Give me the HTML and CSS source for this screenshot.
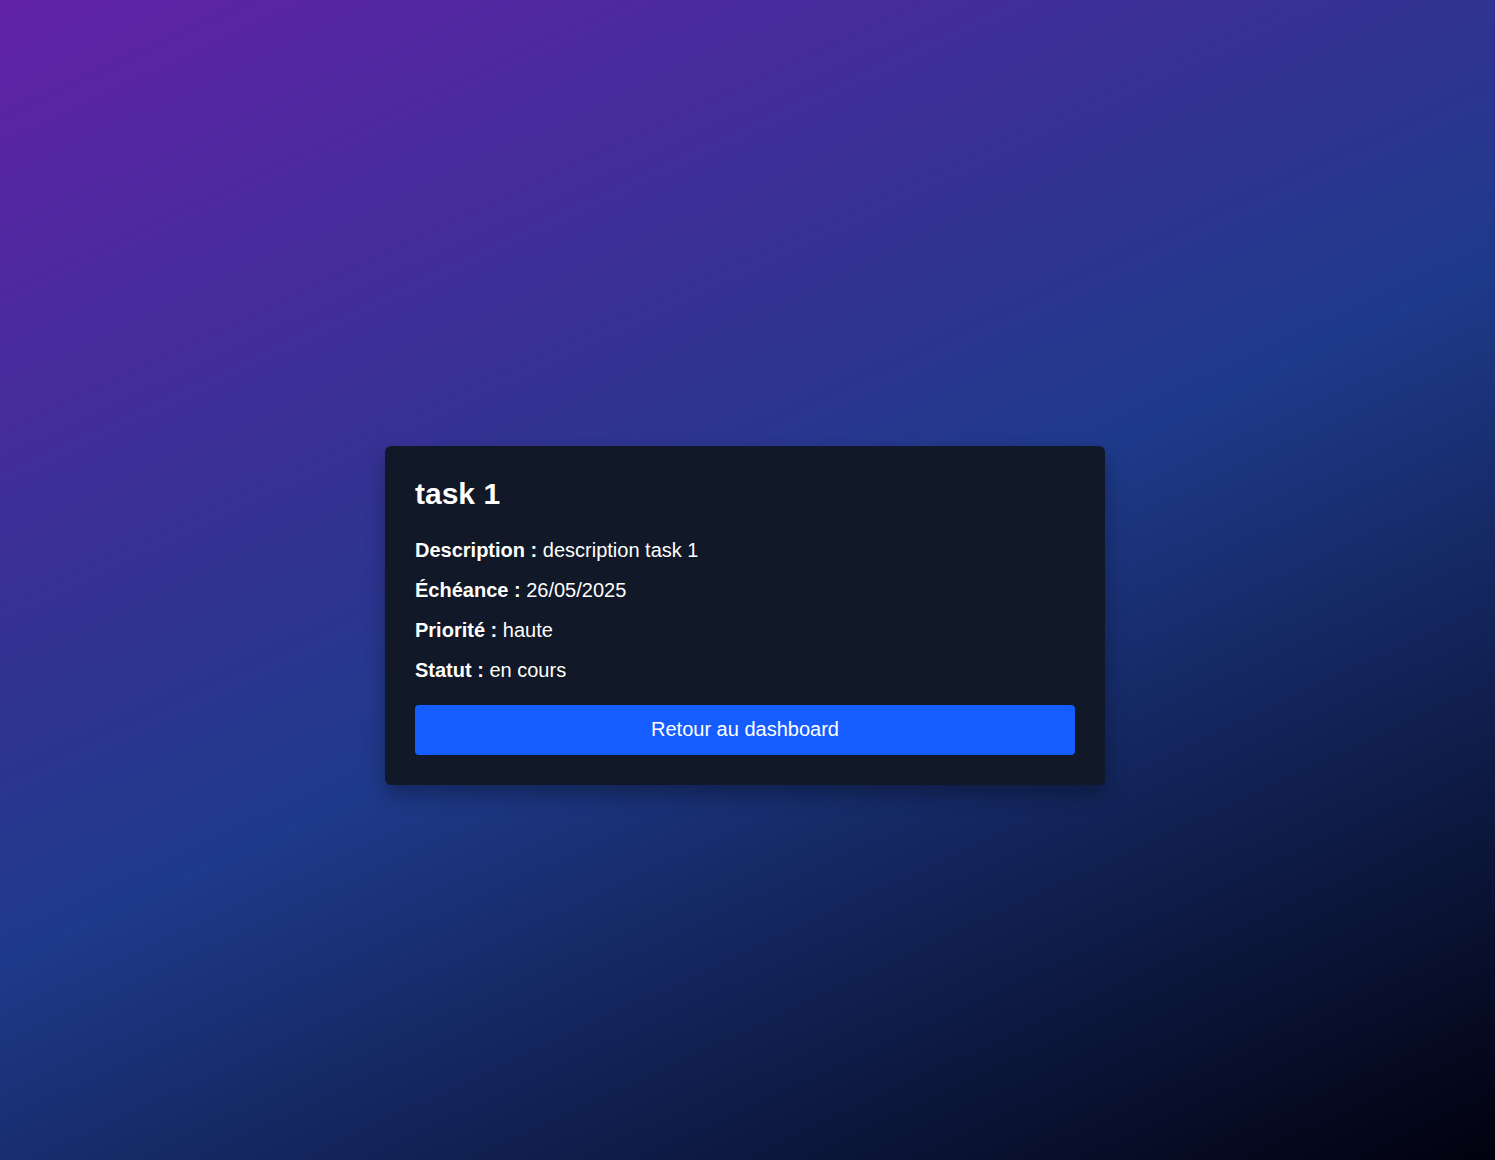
FILE: index.html
```html
<!DOCTYPE html>
<html lang="fr">
<head>
<meta charset="utf-8">
<title>task 1</title>
<link rel="stylesheet" href="styles.css">
</head>
<body>
<main class="page">
  <section class="card">
    <h1 class="title">task 1</h1>
    <p class="row"><strong>Description :</strong> description task 1</p>
    <p class="row"><strong>Échéance :</strong> 26/05/2025</p>
    <p class="row"><strong>Priorité :</strong> haute</p>
    <p class="row"><strong>Statut :</strong> en cours</p>
    <button class="btn" type="button">Retour au dashboard</button>
  </section>
</main>
</body>
</html>
```

FILE: styles.css
```css
* { box-sizing: border-box; }
html, body { margin: 0; padding: 0; }
html { background: #01020f; }
body {
  font-family: "Liberation Sans", Arial, sans-serif;
  color: #ffffff;
  height: 1160px;
  overflow: hidden;
  background-image: linear-gradient(155deg, #6222a8 0%, #1e3a8a 50%, #01020f 96%);
  background-size: 100% 1231px;
  background-repeat: no-repeat;
}
.page {
  height: 1160px;
  padding: 70px 5px 0 0;
  display: flex;
  align-items: center;
  justify-content: center;
}
.card {
  width: 720px;
  background: #111827;
  border-radius: 6px;
  padding: 30px;
  box-shadow: 0 10px 20px rgba(0,0,0,0.3);
}
.title {
  margin: 0 0 24px;
  font-size: 30px;
  line-height: 36px;
  font-weight: 700;
}
.row {
  margin: 0 0 12px;
  font-size: 20px;
  line-height: 28px;
}
.row strong { font-weight: 700; }
.btn {
  display: block;
  width: 100%;
  height: 50px;
  margin-top: 21px;
  border: 0;
  border-radius: 4px;
  background: #165dff;
  color: #ffffff;
  font-family: "Liberation Sans", Arial, sans-serif;
  font-size: 20px;
}
```
